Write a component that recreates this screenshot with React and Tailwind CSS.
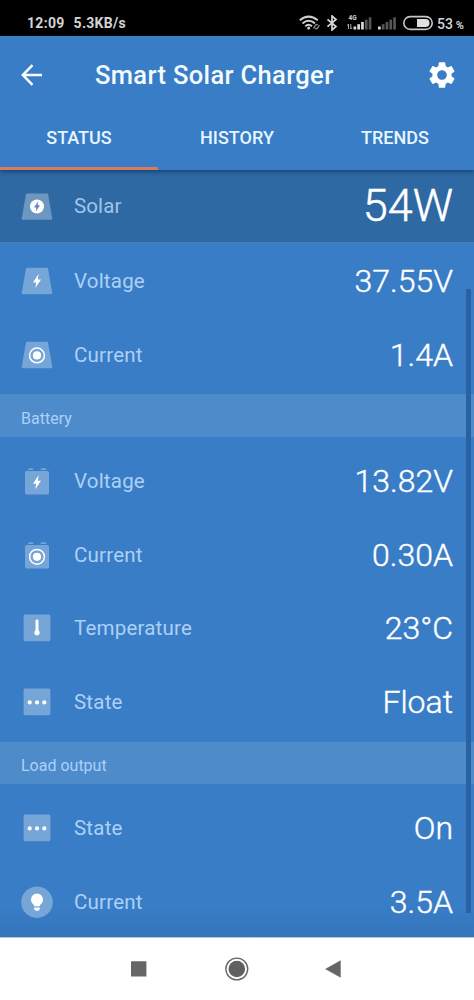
import React from "react";

const Bolt = ({ fill = "#fff", transform }) => (
  <path d="M1.6 -7 L-4 1.4 H-0.9 L-1.6 7 L4 -1.6 H0.9 Z" fill={fill} transform={transform} />
);

const Target = ({ cy }) => (
  <>
    <circle cx="16" cy={cy} r="7.4" fill="none" stroke="#fff" strokeWidth="1.5" />
    <circle cx="16" cy={cy} r="4.1" fill="#fff" />
  </>
);

const SHADE = "#76a5d7";
const Panel = ({ fill = SHADE }) => (
  <path d="M6.4 2.8 H25.6 Q26.8 2.8 27.1 4 L31.3 27.8 Q31.5 29.2 30.2 29.2 H1.8 Q.5 29.2 .7 27.8 L4.9 4 Q5.2 2.8 6.4 2.8 Z" fill={fill} />
);
const Battery = () => (
  <g fill={SHADE}>
    <path d="M7 5 Q7 3.2 8.5 3.2 H11 Q12.5 3.2 12.5 5 Z M19.5 5 Q19.5 3.2 21 3.2 H24 Q25.5 3.2 25.5 5 Z" />
    <rect x="4" y="6" width="24" height="23.5" rx="1.6" />
  </g>
);
const Tile = () => <rect x="2.6" y="2.6" width="26.8" height="26.6" rx="1.6" fill={SHADE} />;

const icons = {
  solar: (
    <>
      <g transform="translate(0 .6)"><Panel fill="#6d96c1" /></g>
      <circle cx="16" cy="16.5" r="7" fill="#fff" />
      <Bolt fill="#5d8abb" transform="translate(16 16.5) scale(.74)" />
    </>
  ),
  panelVoltage: (<><Panel /><Bolt transform="translate(16 16)" /></>),
  panelCurrent: (<><Panel /><Target cy="16.4" /></>),
  batteryVoltage: (<><Battery /><Bolt transform="translate(16 17.3)" /></>),
  batteryCurrent: (<><Battery /><Target cy="17.8" /></>),
  temperature: (
    <>
      <Tile />
      <rect x="14.5" y="7.6" width="3" height="14" rx="1.1" fill="#fff" />
      <circle cx="16" cy="20.7" r="2.6" fill="#fff" />
    </>
  ),
  state: (
    <>
      <Tile />
      <circle cx="8.7" cy="16.4" r="2.1" fill="#fff" />
      <circle cx="16" cy="16.4" r="2.1" fill="#fff" />
      <circle cx="23.3" cy="16.4" r="2.1" fill="#fff" />
    </>
  ),
  bulb: (
    <>
      <circle cx="16" cy="16.2" r="15.8" fill={SHADE} />
      <path d="M16 7.4a6 6 0 0 0-6 6c0 2.200 1.100 3.700 2.300 4.800.6.600.8 1.100.9 2h5.600c.1-.9.3-1.400.9-2 1.200-1.100 2.300-2.600 2.300-4.800a6 6 0 0 0-6-6z" fill="#fff" />
      <path d="M13.200 21.600h5.600v.9q0 2.300-2.800 2.300t-2.800-2.300z" fill="#fff" />
    </>
  ),
};

const Icon = ({ name }) => (
  <svg className="h-8 w-8 shrink-0" viewBox="0 0 32 32">{icons[name]}</svg>
);

function Row({ icon, label, value }) {
  return (
    <div className="flex h-[73.8px] items-center px-[21px]">
      <Icon name={icon} />
      <span className="ml-[21px] text-[20.5px] leading-6 tracking-[0.2px] text-[#acd0f7]">{label}</span>
      <span className="ml-auto text-[32px] font-light leading-9 text-white [-webkit-text-stroke:0.4px_#fff]">{value}</span>
    </div>
  );
}

const Band = ({ children }) => (
  <div className="flex h-[42.5px] shrink-0 items-center bg-[#4d8bcb] pl-[21px] pt-[7px] text-[16px] leading-5 text-[#acd0f7]">
    {children}
  </div>
);

function Signal({ lit }) {
  return (
    <>
      {[0, 1, 2, 3, 4].map((i) => (
        <rect key={i} x={i * 3.8} y={10 - i * 2.3} width="2.7" height={3 + i * 2.3} fill={i < lit ? "#d8d8d8" : "#555"} />
      ))}
    </>
  );
}

function StatusBar() {
  return (
    <div className="flex h-9 shrink-0 items-center bg-black pl-[27px] pr-[10px] pt-[10px] text-[14px] font-bold leading-4 text-[#d4d4d4]">
      <span className="tracking-[0.3px]">12:09</span>
      <span className="ml-[9px] tracking-[0.3px]">5.3KB/s</span>
      <svg className="ml-auto h-4 w-[22px]" viewBox="0 0 22 16" fill="none" stroke="#cfcfcf" strokeWidth="2">
        <path d="M.8 5.3Q9.500-2 18.800 5.300M3.500 8.400Q9.500 3.200 16 8.400M6.300 11.200Q9.500 8.300 13 11.200" />
        <circle cx="9.700" cy="13" r="1.500" fill="#cfcfcf" stroke="none" />
        <path d="M14.500 13.500l2.200-3.500q1-1 2 0M16 13q1.500 1.600 2.600 0l1.800-3" stroke="#888" strokeWidth="1.400" />
      </svg>
      <svg className="ml-[5px] h-4 w-[12px]" viewBox="0 0 12 16" fill="none" stroke="#d8d8d8" strokeWidth="1.700">
        <path d="M1.500 4.300L10 11.500L6 15V1L10 4.500L1.500 11.700" />
      </svg>
      <svg className="ml-[9px] h-4 w-[25px]" viewBox="0 0 25 16">
        <text x="1.500" y="5" fontSize="6.500" fontWeight="700" fill="#d0d0d0">4G</text>
        <path d="M1.500 9v5M3.800 9v5M.5 10.500l1-1.500M3.800 14l1-1.500" stroke="#bbb" strokeWidth=".9" />
        <g transform="translate(6.500 1.500)"><Signal lit={3} /></g>
      </svg>
      <svg className="ml-[6px] h-4 w-[18px]" viewBox="0 0 18 16">
        <g transform="translate(0 1.500)"><Signal lit={1} /></g>
      </svg>
      <svg className="ml-[7px] h-4 w-[30px]" viewBox="0 0 30 16">
        <rect x=".8" y="1.600" width="28.400" height="12.800" rx="6.400" fill="none" stroke="#c8c8c8" strokeWidth="1.600" />
        <path d="M14 4h8.500a4 4 0 0 1 0 8H14z" fill="#e0e0e0" />
      </svg>
      <span className="ml-[4px] mt-[2px] text-[14px] font-medium">53</span>
      <span className="ml-[3px] mt-[6px] text-[11px] leading-3">%</span>
    </div>
  );
}

export default function App() {
  return (
    <div className="relative flex h-[1000px] w-[474px] flex-col overflow-hidden bg-[#397dc6] font-[Roboto,sans-serif]">
      <StatusBar />
      <header className="relative z-10 h-[134px] shrink-0 bg-[#397dc6] shadow-[0_1px_5px_rgba(0,25,65,0.65)]">
        <div className="flex h-[78px] items-center pl-[21px] pr-[16px]">
          <svg className="h-[22px] w-[22px]" viewBox="0 0 22 22" fill="none" stroke="#f4fbff" strokeWidth="2.500">
            <path d="M21 11H2M11.500 1.200L1.800 11L11.500 20.800" />
          </svg>
          <h1 className="ml-[52px] text-[25.5px] font-medium leading-8 tracking-[0.35px] text-[#f4fbff]">Smart Solar Charger</h1>
          <svg className="ml-auto h-8 w-8" viewBox="0 0 24 24" fill="#fff">
            <path d="M19.140 12.940c.040-.300.060-.610.060-.940 0-.320-.020-.640-.070-.940l2.030-1.580c.180-.140.230-.410.120-.610l-1.920-3.320c-.120-.220-.370-.290-.590-.220l-2.390.960c-.500-.380-1.030-.700-1.620-.940l-.360-2.540c-.040-.240-.240-.410-.480-.410h-3.840c-.240 0-.430.170-.470.410l-.360 2.540c-.590.240-1.130.570-1.620.940l-2.390-.960c-.220-.080-.470 0-.590.220L2.740 8.870c-.120.210-.080.470.120.610l2.030 1.580c-.050.300-.090.630-.090.940s.020.640.070.940l-2.030 1.580c-.180.140-.230.410-.120.610l1.920 3.320c.120.220.370.290.590.220l2.390-.960c.500.380 1.030.700 1.620.940l.360 2.540c.050.240.240.410.480.410h3.840c.240 0 .440-.170.470-.410l.360-2.540c.590-.240 1.130-.560 1.620-.940l2.390.960c.220.080.470 0 .590-.220l1.920-3.320c.120-.220.070-.470-.120-.610l-2.010-1.580zM12 15.600c-1.980 0-3.600-1.620-3.600-3.600s1.620-3.600 3.600-3.600 3.600 1.620 3.600 3.600-1.620 3.600-3.600 3.600z" />
          </svg>
        </div>
        <nav className="grid h-14 grid-cols-3 text-center text-[18px] font-medium leading-[48px] text-[#e6f6ff]">
          <span className="border-b-[3px] border-[#d97b5e]">STATUS</span>
          <span>HISTORY</span>
          <span>TRENDS</span>
        </nav>
      </header>
      <main className="relative flex min-h-0 flex-1 flex-col">
        <div className="flex h-[73px] shrink-0 items-center border-b border-[#4a80b7] bg-[#2e69a4] px-[21px]">
          <Icon name="solar" />
          <span className="ml-[21px] text-[20.5px] leading-6 tracking-[0.1px] text-[#a1c5ea]">Solar</span>
          <span className="ml-auto text-[45px] font-light leading-[50px] text-white [-webkit-text-stroke:0.5px_#fff]">54W</span>
        </div>
        <section className="h-[151px] shrink-0 pt-[1.5px]">
          <Row icon="panelVoltage" label="Voltage" value="37.55V" />
          <Row icon="panelCurrent" label="Current" value="1.4A" />
        </section>
        <Band>Battery</Band>
        <section className="h-[305px] shrink-0 pt-[7.5px]">
          <Row icon="batteryVoltage" label="Voltage" value="13.82V" />
          <Row icon="batteryCurrent" label="Current" value="0.30A" />
          <Row icon="temperature" label="Temperature" value="23°C" />
          <Row icon="state" label="State" value="Float" />
        </section>
        <Band>Load output</Band>
        <section className="min-h-0 flex-1 bg-linear-to-b from-[#397dc6] from-80% to-[#3475bc] pt-[7.5px]">
          <Row icon="state" label="State" value="On" />
          <Row icon="bulb" label="Current" value="3.5A" />
        </section>
        <div className="absolute right-[3px] top-[119px] h-[624px] w-[5px] bg-[#2962a0]" />
      </main>
      <footer className="flex h-[63px] shrink-0 items-center border-t border-[#b5c9dd] bg-white pl-[131px]">
        <svg className="h-4 w-4" viewBox="0 0 16 16"><rect x="0" y=".2" width="15.400" height="15.400" rx=".6" fill="#666" /></svg>
        <svg className="ml-[78px] h-6 w-6" viewBox="0 0 24 24">
          <circle cx="11.800" cy="12" r="10.900" fill="none" stroke="#666" strokeWidth="1.400" />
          <circle cx="11.800" cy="12" r="8.300" fill="#606060" />
        </svg>
        <svg className="ml-[76px] h-[18px] w-4" viewBox="0 0 16 18"><path d="M.7 9L15.400 .8V17.200Z" fill="#666" stroke="#666" strokeWidth=".6" /></svg>
      </footer>
    </div>
  );
}
